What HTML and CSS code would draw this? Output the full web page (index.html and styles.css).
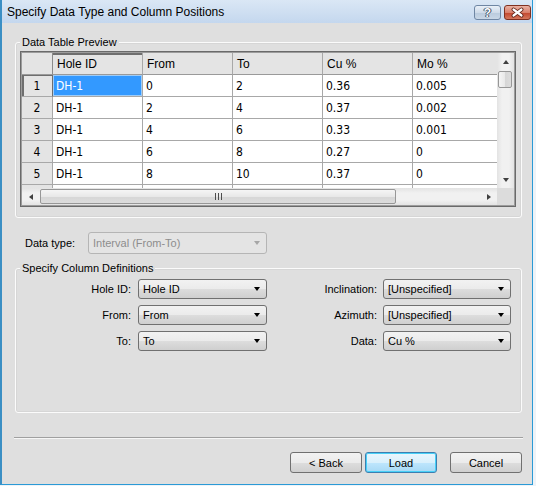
FILE: index.html
```html
<!DOCTYPE html>
<html>
<head>
    <title>Specify Data Type and Column Positions</title>
    <link rel="stylesheet" href="styles.css">
</head>
<body>
<div class="window">
    <!-- Titelbalk -->
    <div class="titlebar">
        <span class="title">Specify Data Type and Column Positions</span>
        <div class="caption-buttons">
            <span class="cap-btn help">?</span>
            <span class="cap-btn close">
                <svg width="27" height="15" viewBox="0 0 27 15">
                    <path d="M9.5 4.5l8 6M17.5 4.5l-8 6" stroke="#5a1d12" stroke-width="4" stroke-linecap="round" fill="none"/>
                    <path d="M9.5 4.5l8 6M17.5 4.5l-8 6" stroke="#ffffff" stroke-width="2.2" stroke-linecap="round" fill="none"/>
                </svg>
            </span>
        </div>
    </div>

    <div class="client">
        <!-- Voorbeeld van de tabel -->
        <div class="group preview">
            <span class="group-title">Data Table Preview</span>
            <div class="grid">
                <div class="grid-view">
                    <div class="grid-row header">
                        <div class="cell corner"></div>
                        <div class="cell col-head current">Hole ID</div>
                        <div class="cell col-head">From</div>
                        <div class="cell col-head">To</div>
                        <div class="cell col-head">Cu %</div>
                        <div class="cell col-head">Mo %</div>
                    </div>
                    <div class="grid-row">
                        <div class="cell row-head current">1</div>
                        <div class="cell selected">DH-1</div>
                        <div class="cell">0</div>
                        <div class="cell">2</div>
                        <div class="cell">0.36</div>
                        <div class="cell">0.005</div>
                    </div>
                    <div class="grid-row">
                        <div class="cell row-head">2</div>
                        <div class="cell">DH-1</div>
                        <div class="cell">2</div>
                        <div class="cell">4</div>
                        <div class="cell">0.37</div>
                        <div class="cell">0.002</div>
                    </div>
                    <div class="grid-row">
                        <div class="cell row-head">3</div>
                        <div class="cell">DH-1</div>
                        <div class="cell">4</div>
                        <div class="cell">6</div>
                        <div class="cell">0.33</div>
                        <div class="cell">0.001</div>
                    </div>
                    <div class="grid-row">
                        <div class="cell row-head">4</div>
                        <div class="cell">DH-1</div>
                        <div class="cell">6</div>
                        <div class="cell">8</div>
                        <div class="cell">0.27</div>
                        <div class="cell">0</div>
                    </div>
                    <div class="grid-row">
                        <div class="cell row-head">5</div>
                        <div class="cell">DH-1</div>
                        <div class="cell">8</div>
                        <div class="cell">10</div>
                        <div class="cell">0.37</div>
                        <div class="cell">0</div>
                    </div>
                    <div class="grid-row">
                        <div class="cell row-head"></div>
                        <div class="cell"></div>
                        <div class="cell"></div>
                        <div class="cell"></div>
                        <div class="cell"></div>
                        <div class="cell"></div>
                    </div>
                </div>

                <!-- Schuifbalken -->
                <div class="vscroll">
                    <span class="sb-btn"><span class="arrow-up"></span></span>
                    <span class="v-thumb"></span>
                    <span class="v-track"></span>
                    <span class="sb-btn"><span class="arrow-down"></span></span>
                </div>
                <div class="hscroll">
                    <span class="sb-btn"><span class="arrow-left"></span></span>
                    <span class="h-thumb">
                        <svg width="7" height="7" viewBox="0 0 7 7">
                            <path d="M0.5 0v7M3.5 0v7M6.5 0v7" stroke="#4d4d4d" stroke-width="1"/>
                        </svg>
                    </span>
                    <span class="h-track"></span>
                    <span class="sb-btn"><span class="arrow-right"></span></span>
                </div>
                <div class="scroll-corner"></div>
            </div>
        </div>

        <!-- Datatype -->
        <div class="type-row">
            <span class="label">Data type:</span>
            <div class="combo disabled">Interval (From-To)<span class="drop"></span></div>
        </div>

        <!-- Kolomdefinities -->
        <div class="group columns">
            <span class="group-title">Specify Column Definitions</span>
            <div class="field-grid">
                <span class="label">Hole ID:</span>
                <div class="combo">Hole ID<span class="drop"></span></div>
                <span class="label">Inclination:</span>
                <div class="combo">[Unspecified]<span class="drop"></span></div>

                <span class="label">From:</span>
                <div class="combo">From<span class="drop"></span></div>
                <span class="label">Azimuth:</span>
                <div class="combo">[Unspecified]<span class="drop"></span></div>

                <span class="label">To:</span>
                <div class="combo">To<span class="drop"></span></div>
                <span class="label">Data:</span>
                <div class="combo">Cu %<span class="drop"></span></div>
            </div>
        </div>

        <div class="separator"></div>

        <div class="buttons">
            <button class="btn">&lt; Back</button>
            <button class="btn default">Load</button>
            <button class="btn cancel">Cancel</button>
        </div>
    </div>
</div>
</body>
</html>
```

FILE: styles.css
```css
body {
    margin: 0;
    padding: 0;
    background-color: #eef3f8;
    font-family: "Liberation Sans", Arial, sans-serif;
    font-size: 11px;
    color: #000000;
}

/* Venster */
.window {
    width: 533px;
    height: 485px;
    box-sizing: border-box;
    border-left: 2px solid #3b8fc4;
    border-right: 1px solid #2a9ad6;
    border-bottom: 1px solid #2a9ad6;
    background-color: #dfdfdf;
    display: flex;
    flex-direction: column;
}

.titlebar {
    height: 23px;
    flex: none;
    display: flex;
    align-items: center;
    padding: 0 1px 0 5px;
    background: linear-gradient(#dae7f5, #c4d7ee);
}

.title {
    font-size: 12px;
    flex: 1;
}

.caption-buttons {
    display: flex;
    gap: 3px;
    align-self: flex-start;
    margin-top: 5px;
}

.cap-btn {
    width: 27px;
    height: 15px;
    box-sizing: border-box;
    border-radius: 3px;
    display: flex;
    align-items: center;
    justify-content: center;
}

.cap-btn.help {
    border: 1px solid #6f86a3;
    background: linear-gradient(#e9f0f8 0%, #cfdbe9 50%, #b9cadd 51%, #c9d7e6 100%);
    color: #ffffff;
    font-weight: bold;
    font-size: 12px;
    text-shadow: 0 0 1px #2d3e55, 0 0 1px #2d3e55, 1px 0 0 #4a5d77, -1px 0 0 #4a5d77;
}

.cap-btn.close {
    border: 1px solid #7f3020;
    background: linear-gradient(#eab2a4 0%, #d9806c 50%, #c2452d 51%, #d4775c 100%);
}

.cap-btn.close svg {
    margin: -1px;
}

.client {
    flex: 1;
    padding: 19px 10px 0 13px;
}

/* Groepsvakken */
.group {
    position: relative;
    box-sizing: border-box;
    border: 1px solid #fbfbfb;
    border-radius: 3px;
    box-shadow: 0 0 0 1px #d6d6d6 inset;
}

.group-title {
    position: absolute;
    top: -7px;
    left: 4px;
    padding: 0 2px;
    line-height: 13px;
    background-color: #dfdfdf;
}

.group.preview {
    height: 176px;
    padding: 8px 5px 0 4px;
}

.group.columns {
    height: 145px;
    margin-top: 14px;
    padding-top: 10px;
}

/* Tabel */
.grid {
    width: 496px;
    height: 156px;
    box-sizing: border-box;
    border: 1px solid #6a6a6a;
    box-shadow: 0 0 0 1px #9c9c9c inset;
    padding: 1px;
    display: grid;
    grid-template-columns: 1fr 17px;
    grid-template-rows: 1fr 17px;
    background-color: #ffffff;
}

.grid-view {
    overflow: hidden;
    font-family: "DejaVu Sans Condensed", "Liberation Sans", sans-serif;
    font-size: 12px;
}

.grid-row {
    display: grid;
    grid-template-columns: 31px repeat(5, 90px);
    height: 22px;
}

.cell {
    box-sizing: border-box;
    border-right: 1px solid #a8a8a8;
    border-bottom: 1px solid #a8a8a8;
    padding-left: 3px;
    display: flex;
    align-items: center;
    white-space: nowrap;
    overflow: hidden;
}

.header .cell {
    background-color: #e4e4e4;
    font-family: "Liberation Sans", sans-serif;
    font-size: 12px;
    padding-left: 4px;
    border-bottom-color: #9a9a9a;
}

.cell.corner {
    border-right-color: #8a8a8a;
}

.col-head.current {
    box-shadow: inset 0 2px 0 #6e6e6e;
}

.row-head {
    background-color: #e4e4e4;
    justify-content: center;
    padding-left: 0;
}

.row-head.current {
    box-shadow: inset 2px 1px 0 #6e6e6e;
    border-right-color: #6e6e6e;
}

.cell.selected {
    background-color: #3399ff;
    color: #ffffff;
    box-shadow: inset 0 0 0 1px #9fccf7;
}

/* Schuifbalken */
.vscroll, .hscroll {
    display: flex;
    background: #ececec;
}

.vscroll {
    flex-direction: column;
    background: linear-gradient(90deg, #e3e3e3, #f1f1f1 30%, #f1f1f1 70%, #e3e3e3);
}

.hscroll {
    background: linear-gradient(#e3e3e3, #f1f1f1 30%, #f1f1f1 70%, #e3e3e3);
}

.sb-btn {
    width: 17px;
    height: 17px;
    flex: none;
    display: flex;
    align-items: center;
    justify-content: center;
}

.v-track, .h-track {
    flex: 1;
}

.v-thumb {
    height: 15px;
    margin: 1px 2px 0 1px;
    border: 1px solid #979797;
    border-radius: 2px;
    background: linear-gradient(90deg, #f5f5f5, #e8e8e8 50%, #d6d6d6 51%, #dcdcdc);
}

.h-thumb {
    width: 356px;
    margin: 1px 0 1px 1px;
    box-sizing: border-box;
    border: 1px solid #979797;
    border-radius: 2px;
    background: linear-gradient(#f5f5f5, #e8e8e8 50%, #d6d6d6 51%, #dcdcdc);
    display: flex;
    align-items: center;
    justify-content: center;
}

.scroll-corner {
    background-color: #dcdcdc;
}

.arrow-up, .arrow-down, .arrow-left, .arrow-right {
    width: 0;
    height: 0;
    border-style: solid;
}

.arrow-up {
    border-width: 0 3.5px 4px 3.5px;
    border-color: transparent transparent #404040 transparent;
}

.arrow-down {
    border-width: 4px 3.5px 0 3.5px;
    border-color: #404040 transparent transparent transparent;
}

.arrow-left {
    border-width: 3.5px 4px 3.5px 0;
    border-color: transparent #404040 transparent transparent;
}

.arrow-right {
    border-width: 3.5px 0 3.5px 4px;
    border-color: transparent transparent transparent #404040;
}

/* Keuzelijsten */
.type-row {
    display: flex;
    align-items: center;
    margin-top: 14px;
    padding-left: 10px;
}

.type-row .label {
    width: 63px;
}

.combo {
    position: relative;
    box-sizing: border-box;
    height: 20px;
    border: 1px solid #707070;
    border-radius: 3px;
    background: linear-gradient(#f2f2f2 0%, #ebebeb 50%, #dddddd 51%, #cfcfcf 100%);
    padding-left: 4px;
    display: flex;
    align-items: center;
}

.combo.disabled {
    width: 179px;
    height: 22px;
    border-color: #b5b5b5;
    background: #e4e4e4;
    color: #8d8d8d;
}

.drop {
    position: absolute;
    right: 6px;
    top: 50%;
    margin-top: -2px;
    width: 0;
    height: 0;
    border-style: solid;
    border-width: 4px 3.5px 0 3.5px;
    border-color: #000000 transparent transparent transparent;
}

.combo.disabled .drop {
    border-top-color: #a6a6a6;
}

.field-grid {
    display: grid;
    grid-template-columns: 122px 129px 116px 128px;
    grid-auto-rows: 20px;
    row-gap: 6px;
    align-items: center;
}

.field-grid .label {
    text-align: right;
    padding-right: 7px;
}

.field-grid .label:nth-child(4n+3) {
    padding-right: 6px;
}

/* Knoppen */
.separator {
    margin: 24px 0 0 -1px;
    width: 509px;
    border-top: 1px solid #a0a0a0;
    border-bottom: 1px solid #f6f6f6;
}

.buttons {
    display: flex;
    justify-content: flex-end;
    width: 507px;
    margin-top: 13px;
}

.btn {
    width: 72px;
    height: 21px;
    margin-left: 3px;
    border: 1px solid #707070;
    border-radius: 3px;
    background: linear-gradient(#f2f2f2 0%, #ebebeb 50%, #dddddd 51%, #cfcfcf 100%);
    font-family: "Liberation Sans", Arial, sans-serif;
    font-size: 11px;
    color: #000000;
    padding: 0;
}

.btn.default {
    border-color: #3c7fb1;
    background: linear-gradient(#eaf6fd 0%, #d9f0fc 50%, #bee6fd 51%, #a7d9f5 100%);
    box-shadow: inset 0 0 0 1px #48d0f7;
}

.btn.cancel {
    margin-left: 13px;
}
```
